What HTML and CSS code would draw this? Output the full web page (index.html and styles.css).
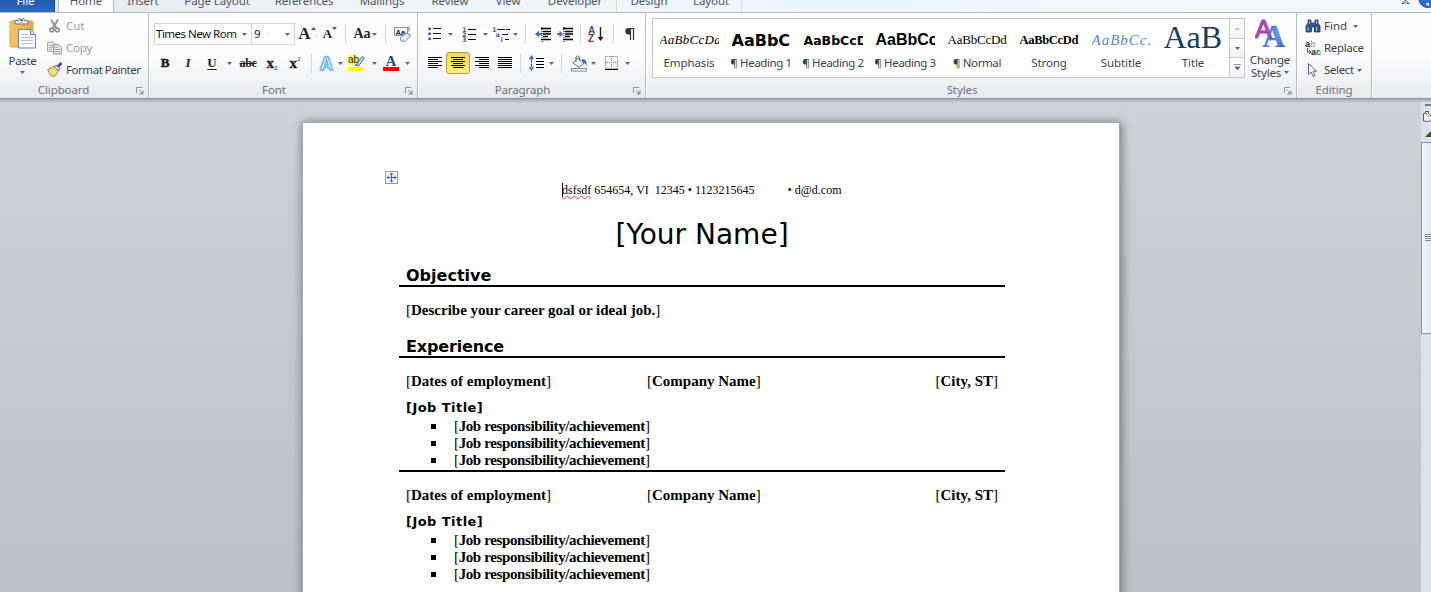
FILE: index.html
```
<!DOCTYPE html>
<html lang="en">
<head>
<meta charset="utf-8">
<title>Resume - Word</title>
<link rel="stylesheet" href="styles.css">
</head>
<body>
<svg class="defs" width="0" height="0">
  <defs>
    <linearGradient id="board" x1="0" x2="1"><stop offset="0" stop-color="#f3c567"/><stop offset="1" stop-color="#e5a940"/></linearGradient>
    <linearGradient id="blueA" x1="0" y1="0" x2="1" y2="1"><stop offset="0" stop-color="#3e74d6"/><stop offset=".6" stop-color="#5e98ee"/><stop offset="1" stop-color="#2450a8"/></linearGradient>
    <symbol id="launcher" viewBox="0 0 8 8"><path d="M0.5 6V.5H6" fill="none" stroke="#8f949c"/><path d="M3 3l3 3" stroke="#8f949c"/><path d="M7.5 3v4.500H3z" fill="#8f949c"/></symbol>
    <symbol id="down" viewBox="0 0 5 3"><path d="M0 0h5L2.500 3z" fill="#62666c"/></symbol>
  </defs>
</svg>

<nav class="tabs">
  <span class="tab file">File</span>
  <span class="tab home">Home</span>
  <span class="tab insert">Insert</span>
  <span class="tab pagelayout">Page Layout</span>
  <span class="tab references">References</span>
  <span class="tab mailings">Mailings</span>
  <span class="tab review">Review</span>
  <span class="tab view">View</span>
  <span class="tab developer">Developer</span>
  <span class="tab design">Design</span>
  <span class="tab layout">Layout</span>
  <svg class="help" width="36" height="10" viewBox="0 0 36 10">
    <path d="M7 3.500L10.500 0 14 3.500H11.800L10.500 2.200 9.200 3.500z" fill="#fff" stroke="#4b5158"/>
    <circle cx="32.500" cy="-1" r="8.500" fill="#2f6fc8" stroke="#1c4f9c"/><rect x="31.500" y="3" width="2.500" height="2.500" fill="#fff"/>
  </svg>
</nav>

<div class="ribbon">
  <section class="group clipboard">
    <div class="body">
      <div class="paste">
        <svg width="28" height="32" viewBox="0 0 28 32">
          <rect x="1" y="3" width="23" height="26" rx="1.500" fill="url(#board)" stroke="#dba648"/>
          <path d="M6 6V2.500h3.500a3 3 0 0 1 6 0H19V6z" fill="#e3e7ec" stroke="#6f7984"/><circle cx="12.500" cy="2.300" r="1.200" fill="#56606b"/>
          <path d="M9.500 11.500h12l5 5v13.500h-17z" fill="#f7faff" stroke="#6d86ab"/><path d="M21.500 11.500v5h5" fill="#cfdcf0" stroke="#6d86ab"/>
          <path d="M12 16.500h7M12 19.500h12M12 22.500h12M12 25.500h12" stroke="#b4c2d8"/>
        </svg>
        <span>Paste</span>
        <svg class="arr" width="5" height="3"><use href="#down"/></svg>
      </div>
      <div class="cmds">
        <div class="cmd off"><svg width="16" height="16" viewBox="0 0 16 16"><path d="M4 1.500l5.500 9M11 1.500l-5.500 9" stroke="#96999d" stroke-width="2.200"/><circle cx="4.700" cy="12" r="1.900" fill="none" stroke="#8b8e92" stroke-width="1.700"/><circle cx="10.300" cy="12" r="1.900" fill="none" stroke="#8b8e92" stroke-width="1.700"/></svg><span class="t-cut">Cut</span></div>
        <div class="cmd off"><svg width="16" height="16" viewBox="0 0 16 16"><path d="M.5 2h6l2 2v7.500h-8z" fill="#e6e6e6" stroke="#a9a9a9"/><path d="M2 5.500h4M2 7.500h4M2 9.500h3" stroke="#b3b3b3"/><path d="M6.500 4.500h5l3 3v6.500h-8z" fill="#e2e2e2" stroke="#989898"/><path d="M8 7.500h3M8 9.500h5M8 11.500h5" stroke="#a8a8a8"/></svg><span class="t-copy">Copy</span></div>
        <div class="cmd"><svg width="16" height="16" viewBox="0 0 16 16"><path d="M0.500 8L7 4.500l4.500 4.500-4 5.500-3-.5z" fill="#f3dc77" stroke="#a58a32"/><path d="M3 9.500l4 4M5 8l4 4" stroke="#fff3b5"/><path d="M7 4.500l2-1.500 4 4-1.500 2z" fill="#dfe2e6" stroke="#6e757e"/><path d="M11 4.500L14.500 1" stroke="#4a4a9c" stroke-width="3"/></svg><span class="t-fp">Format Painter</span></div>
      </div>
    </div>
    <footer><span>Clipboard</span><svg width="8" height="8"><use href="#launcher"/></svg></footer>
  </section>

  <section class="group font">
    <div class="body rows">
      <div class="row">
        <div class="combo face"><span>Times New Rom</span><svg width="5" height="3"><use href="#down"/></svg></div>
        <div class="combo size"><span>9</span><svg width="5" height="3"><use href="#down"/></svg></div>
        <div class="c w24 serif grow">A<svg width="5" height="3" viewBox="0 0 5 3"><path d="M0 3h5L2.500 0z" fill="#2c57a8"/></svg></div>
        <div class="c w22 serif shrink">A<svg width="5" height="3" viewBox="0 0 5 3"><path d="M0 0h5L2.500 3z" fill="#2c57a8"/></svg></div>
        <div class="c w8"><i class="sep"></i></div>
        <div class="c w20 serif aa">Aa</div>
        <div class="c w8"><svg width="5" height="3"><use href="#down"/></svg></div>
        <div class="c w14"><i class="sep"></i></div>
        <div class="c w22"><svg width="18" height="17" viewBox="0 0 18 17"><rect x=".5" y="1.500" width="13" height="8" fill="#fff" stroke="#7b93b8"/><text x="1.500" y="8.500" class="tiny">Aa</text><path d="M15 .5v5" stroke="#4a75b8"/><path d="M6 12l6-5 4 1.500v2L11 15.500 7 15z" fill="#e4ecf7" stroke="#6e8db8"/></svg></div>
      </div>
      <div class="row second">
        <div class="c w22 serif b">B</div>
        <div class="c w24 serif i">I</div>
        <div class="c w24 serif u">U</div>
        <div class="c w11"><svg width="5" height="3"><use href="#down"/></svg></div>
        <div class="c w26 serif strike">abc</div>
        <div class="c w22 serif x">x<sub>2</sub></div>
        <div class="c w24 serif x">x<sup>2</sup></div>
        <div class="c w8"><i class="sep"></i></div>
        <div class="c w22"><svg width="17" height="17" viewBox="0 0 17 17"><text x="2" y="14.500" class="glow">A</text></svg></div>
        <div class="c w6"><svg width="5" height="3"><use href="#down"/></svg></div>
        <div class="c w26"><svg width="17" height="17" viewBox="0 0 17 17"><rect x="0" y="0" width="9" height="10" fill="#ff6"/><text x="0" y="7.500" class="ab">ab</text><path d="M8.500 9.500L14 1.500l2.500 1.500-6 8z" fill="#c9d7ea" stroke="#526d96"/><path d="M6.500 11l2-2 2 1.500z" fill="#47505c"/><rect x="0" y="12" width="16" height="4" fill="#ff0"/></svg></div>
        <div class="c w11"><svg width="5" height="3"><use href="#down"/></svg></div>
        <div class="c w22"><svg width="16" height="17" viewBox="0 0 16 17"><text x="2.500" y="10.500" class="fc">A</text><rect x="0" y="12" width="16" height="4" fill="#f00"/></svg></div>
        <div class="c w11"><svg width="5" height="3"><use href="#down"/></svg></div>
      </div>
    </div>
    <footer><span>Font</span><svg width="8" height="8"><use href="#launcher"/></svg></footer>
  </section>

  <section class="group para">
    <div class="body rows">
      <div class="row first">
        <div class="c w20"><svg width="14" height="14" viewBox="0 0 14 14"><g fill="#3a62b5"><circle cx="1.600" cy="1.700" r="1.500"/><circle cx="1.600" cy="6.700" r="1.500"/><circle cx="1.600" cy="11.700" r="1.500"/></g><path d="M5 1.500h8M5 6.500h8M5 11.500h8" stroke="#111"/></svg></div>
        <div class="c w11"><svg width="5" height="3"><use href="#down"/></svg></div>
        <div class="c w26"><svg width="15" height="15" viewBox="0 0 15 15"><text x="0" y="4.800" class="num">1</text><text x="0" y="9.800" class="num">2</text><text x="0" y="14.700" class="num">3</text><path d="M6 2.500h8M6 7.500h8M6 12.500h8" stroke="#111"/></svg></div>
        <div class="c w6"><svg width="5" height="3"><use href="#down"/></svg></div>
        <div class="c w22 nudge"><svg width="18" height="15" viewBox="0 0 18 15"><text x="0" y="4.800" class="num">1</text><text x="3.500" y="9.800" class="num">a</text><text x="8.500" y="14.700" class="num">i</text><path d="M5 2.500h13M10 7.500h6M13 12.500h4" stroke="#111" stroke-dasharray="8 1"/></svg></div>
        <div class="c w6"><svg width="5" height="3"><use href="#down"/></svg></div>
        <div class="c w14"><i class="sep"></i></div>
        <div class="c w22"><svg width="16" height="15" viewBox="0 0 16 15"><path d="M6 1.500h10M8 4.500h8M8 7h8M8 9.500h5M6 12.500h10" stroke="#000" stroke-width="1.500"/><path d="M0 7l4-3.500V6h3v2H4v2.500z" fill="#3b6fd0"/><path d="M7 0v15" stroke="#000" stroke-dasharray="1 1"/></svg></div>
        <div class="c w22"><svg width="16" height="15" viewBox="0 0 16 15"><path d="M6 1.500h10M8 4.500h8M8 7h8M8 9.500h5M6 12.500h10" stroke="#000" stroke-width="1.500"/><path d="M6 7L2.500 3.500V6H0v2h2.500v2.500z" fill="#3b6fd0"/><path d="M7 0v15" stroke="#000" stroke-dasharray="1 1"/></svg></div>
        <div class="c w8"><i class="sep"></i></div>
        <div class="c w24"><svg width="16" height="17" viewBox="0 0 16 17"><text x="0" y="8" class="az a">A</text><text x="0" y="16" class="az z">Z</text><path d="M12.500 1v12" stroke="#222" stroke-width="1.400"/><path d="M9.500 11h6l-3 4z" fill="#222"/></svg></div>
        <div class="c w11"><i class="sep"></i></div>
        <div class="c w22"><svg width="12" height="14" viewBox="0 0 12 14"><path d="M10.500 1.500H5M6.500 1v12M9.500 1v12" stroke="#333" stroke-width="1.200" fill="none"/><path d="M6.500 1H4.500a3 3 0 0 0 0 6.500h2z" fill="#333"/></svg></div>
      </div>
      <div class="row second">
        <div class="c w22"><svg width="14" height="12" viewBox="0 0 14 12"><path d="M0 .5h14M0 2.500h10M0 4.500h14M0 6.500h10M0 8.500h14M0 10.500h10" stroke="#000"/></svg></div>
        <div class="c w24 active"><svg width="14" height="12" viewBox="0 0 14 12"><path d="M0 .5h14M2 2.500h10M0 4.500h14M2 6.500h10M0 8.500h14M2 10.500h10" stroke="#000"/></svg></div>
        <div class="c w24"><svg width="14" height="12" viewBox="0 0 14 12"><path d="M0 .5h14M4 2.500h10M0 4.500h14M4 6.500h10M0 8.500h14M4 10.500h10" stroke="#000"/></svg></div>
        <div class="c w22"><svg width="14" height="12" viewBox="0 0 14 12"><path d="M0 .5h14M0 2.500h14M0 4.500h14M0 6.500h14M0 8.500h14M0 10.500h14" stroke="#000"/></svg></div>
        <div class="c w8"><i class="sep"></i></div>
        <div class="c w24"><svg width="15" height="16" viewBox="0 0 15 16"><path d="M2.500 0L0 4h5zM2.500 16L0 12h5zM1.800 3v10h1.400V3z" fill="#2f63c4"/><path d="M0 8h5" stroke="#fff"/><path d="M7 3.500h8M7 6.500h8M7 9.500h8M7 12.500h8" stroke="#000"/></svg></div>
        <div class="c w6"><svg width="5" height="3"><use href="#down"/></svg></div>
        <div class="c w14"><i class="sep"></i></div>
        <div class="c w22"><svg width="17" height="17" viewBox="0 0 17 17"><path d="M2 8l5-5 6 5-5 4.500z" fill="#eaf1fa" stroke="#587299"/><path d="M5 6.500V2a2 2 0 0 1 3.500 0v4" fill="none" stroke="#55677e"/><path d="M11 4c4 0 5 3 4.500 7-1-2-2-3.500-4.500-4z" fill="#3b6cc2"/><rect x=".5" y="13.500" width="15" height="2.500" fill="#fff" stroke="#888"/></svg></div>
        <div class="c w6"><svg width="5" height="3"><use href="#down"/></svg></div>
        <div class="c w26 nudge"><svg width="13" height="14" viewBox="0 0 13 14"><path d="M.5 .5h12v11M.5 .5v12M6.500 0v12M0 6.500h13" fill="none" stroke="#777" stroke-dasharray="1 1"/><path d="M0 13.500h13" stroke="#000" stroke-width="1.500"/></svg></div>
        <div class="c w6"><svg width="5" height="3"><use href="#down"/></svg></div>
      </div>
    </div>
    <footer><span>Paragraph</span><svg width="8" height="8"><use href="#launcher"/></svg></footer>
  </section>

  <section class="group styles">
    <div class="body">
      <div class="gallery">
        <div class="style"><div class="pv p-emph">AaBbCcDd</div><span>Emphasis</span></div>
        <div class="style"><div class="pv p-h1">AaBbC</div><span class="hd">¶ Heading 1</span></div>
        <div class="style"><div class="pv p-h2">AaBbCcD</div><span class="hd">¶ Heading 2</span></div>
        <div class="style"><div class="pv p-h3">AaBbCc</div><span class="hd">¶ Heading 3</span></div>
        <div class="style"><div class="pv p-norm">AaBbCcDd</div><span class="hd">¶ Normal</span></div>
        <div class="style"><div class="pv p-strong">AaBbCcDd</div><span>Strong</span></div>
        <div class="style"><div class="pv p-sub">AaBbCc.</div><span>Subtitle</span></div>
        <div class="style"><div class="pv p-title">AaB</div><span>Title</span></div>
        <div class="gscroll">
          <i class="dis"><svg width="5" height="3" viewBox="0 0 5 3"><path d="M0 3h5L2.500 0z" fill="#c0c3c7"/></svg></i>
          <i><svg width="5" height="3"><use href="#down"/></svg></i>
          <i><svg width="7" height="7" viewBox="0 0 7 7"><path d="M0 .5h7M1 3h5L3.500 6z" fill="#62666c" stroke="#62666c" stroke-width=".7"/></svg></i>
        </div>
      </div>
      <div class="change">
        <svg width="30" height="28" viewBox="0 0 30 28"><text x="0" y="19" class="pinkA">A</text><text x="7.500" y="27.500" class="bigA">A</text></svg>
        <span>Change</span>
        <span class="st">Styles <svg width="5" height="3"><use href="#down"/></svg></span>
      </div>
    </div>
    <footer><span>Styles</span><svg width="8" height="8"><use href="#launcher"/></svg></footer>
  </section>

  <section class="group editing">
    <div class="body">
      <div class="cmds">
        <div class="cmd"><svg width="16" height="16" viewBox="0 0 16 16"><path d="M3 2h3v3h4V2h3v3l2 3v6H9.500V9h-3v5H1V8l2-3z" fill="#34558f" stroke="#1e3a6e" stroke-width=".8"/><path d="M3 9v4M11.500 9v4M4.500 3v3M11.500 3v3" stroke="#a9c3ea"/></svg><span class="t-find">Find</span><svg class="arr" width="5" height="3"><use href="#down"/></svg></div>
        <div class="cmd"><svg width="16" height="16" viewBox="0 0 16 16"><text x="0" y="7" class="rep">a<tspan fill="#aaa">b</tspan></text><text x="6" y="14.500" class="rep">a<tspan fill="#168a16">c</tspan></text><path d="M2.500 8v4h3M4 10l2 2-2 2" fill="none" stroke="#30589e"/></svg><span class="t-rep">Replace</span></div>
        <div class="cmd"><svg width="16" height="16" viewBox="0 0 16 16"><path d="M3.500 1.500v11l2.700-2.500 2 4.500 2-1-2-4.200h3.300z" fill="#fff" stroke="#53688c"/></svg><span class="t-sel">Select</span><svg class="arr near" width="5" height="3"><use href="#down"/></svg></div>
      </div>
    </div>
    <footer><span>Editing</span></footer>
  </section>
</div>

<main class="workspace">
  <article class="page">
    <svg class="anchor" width="13" height="13" viewBox="0 0 13 13"><rect x=".5" y=".5" width="12" height="12" fill="#f3f5f8" stroke="#979ca4"/><path d="M6.500 2.500v8M2.500 6.500h8" stroke="#3565c0"/><path d="M6.500 1.500l2 2h-4zM6.500 11.500l2-2h-4zM1.500 6.500l2-2v4zM11.500 6.500l-2-2v4z" fill="#3565c0"/></svg>
    <p class="contact"><i class="caret"></i><span class="typo">dsfsdf</span> 654654, VI&nbsp; 12345 • 1123215645<span class="mail">• d@d.com</span></p>
    <h1>[Your Name]</h1>
    <h2 class="obj">Objective</h2>
    <p class="goal">[<b>Describe your career goal or ideal job.</b>]</p>
    <h2 class="exp">Experience</h2>
    <div class="job">
      <div class="head"><span class="dates">[<b>Dates of employment</b>]</span><span class="co">[<b>Company Name</b>]</span><span class="city">[<b>City, ST</b>]</span></div>
      <h3>[Job Title]</h3>
      <ul><li><span>[<b>Job responsibility/achievement</b>]</span></li><li><span>[<b>Job responsibility/achievement</b>]</span></li><li><span>[<b>Job responsibility/achievement</b>]</span></li></ul>
    </div>
    <div class="job">
      <div class="head"><span class="dates">[<b>Dates of employment</b>]</span><span class="co">[<b>Company Name</b>]</span><span class="city">[<b>City, ST</b>]</span></div>
      <h3>[Job Title]</h3>
      <ul><li><span>[<b>Job responsibility/achievement</b>]</span></li><li><span>[<b>Job responsibility/achievement</b>]</span></li><li><span>[<b>Job responsibility/achievement</b>]</span></li></ul>
    </div>
  </article>
  <aside class="vscroll">
    <i class="split"></i>
    <svg class="ruler" width="8" height="13" viewBox="0 0 8 13"><path d="M.5 11V3.500h2v-2h3v2l3 3v5l-1-1-2 1z" fill="#fff" stroke="#555"/><path d="M3 3l4 5" stroke="#a05050" stroke-dasharray="1 1"/></svg>
    <svg class="up" width="6" height="5" viewBox="0 0 6 5"><path d="M0 5L5 0h1v5z" fill="#444"/></svg>
    <div class="thumb"><svg width="6" height="8" viewBox="0 0 6 8"><path d="M0 .5h6M0 2.500h6M0 4.500h6M0 6.500h6" stroke="#858a92"/></svg></div>
  </aside>
</main>
</body>
</html>
```
FILE: styles.css
```
* { box-sizing: border-box; }
html, body { height: 100%; }
body {
  margin: 0; width: 1431px; height: 592px; overflow: hidden;
  display: flex; flex-direction: column;
  font: 12px/14px "Noto Sans", "Open Sans", sans-serif; color: #3b3f46;
}
svg { display: block; flex: none; }
i { font-style: normal; }
.defs { position: absolute; }

/* tab strip */
.tabs {
  flex: none; height: 13px; display: flex; overflow: hidden;
  background: linear-gradient(90deg, #e4e9f0, #f0f5fb 30%, #eef6fd 60%, #f3f8fe);
  border-bottom: 1px solid #b3b8c0; font-size: 11.5px; letter-spacing: -.1px;
}
.tab { flex: none; display: flex; justify-content: center; height: 22px; line-height: 20px; margin-top: -9px; white-space: nowrap; color: #50555d; }
.file { width: 55px; padding-right: 3px; margin-right: 3px; background: linear-gradient(#1c4fa5, #2c69c6); color: #fff; border-right: 1px solid #1a4a9a; }
.home { width: 56px; background: #fff; border: solid #b3b8c0; border-width: 0 1px; }
.insert { width: 58px; }
.pagelayout { width: 90px; }
.references { width: 84px; }
.mailings { width: 72px; }
.review { width: 64px; }
.view { width: 52px; }
.developer { width: 83px; border-right: 1px solid #e2ddb5; }
.design { width: 64px; }
.layout { width: 61px; border-right: 1px solid #dcdcc5; }
.help { margin-left: auto; }

/* ribbon */
.ribbon {
  flex: none; height: 86px; display: flex;
  background: linear-gradient(#fff, #fcfcfd 50%, #f2f3f5 75%, #e6e9ed);
  border-bottom: 1px solid #8d9299;
}
.group { flex: none; display: flex; flex-direction: column; border-right: 1px solid #b9bdc3; box-shadow: 1px 0 #fff; }
.clipboard { width: 149px; }
.font { width: 269px; }
.para { width: 228px; }
.styles { width: 651px; }
.editing { width: 75px; }
.body { height: 68px; display: flex; }
footer { display: grid; grid-template-columns: 12px 1fr 12px; height: 16px; line-height: 17px; text-align: center; color: #6c717c; font-size: 11.5px; letter-spacing: -.1px; }
footer span { grid-column: 2; padding-right: 21px; }
.font footer span { padding-right: 18px; }
.para footer span, .styles footer span { padding-right: 18px; }
.editing footer span { padding: 0; }
footer svg { margin-top: 6px; }

.paste { width: 45px; display: flex; flex-direction: column; align-items: center; padding-top: 5px; }
.paste span { margin-top: 4px; font-size: 11.5px; line-height: 14px; letter-spacing: -.3px; }
.paste .arr { margin-top: 3px; }
.cmds { padding-top: 2px; font-size: 11.5px; }
.cmd { height: 22px; display: flex; align-items: center; margin-left: 2px; white-space: nowrap; }
.cmd span { margin-left: 3px; }
.cmd .arr { margin-left: 6px; }
.cmd .near { margin-left: 3px; }
.off { color: #9a9da2; }
.t-copy { letter-spacing: -.2px; }
.t-fp { letter-spacing: -.45px; }
.editing .cmd { margin-left: 8px; }
.t-rep, .t-sel { letter-spacing: -.35px; }

.rows { flex-direction: column; padding-top: 7px; }
.row { height: 28px; display: flex; align-items: center; padding-left: 5px; }
.second { margin-top: 1px; }
.para .first { padding-left: 7px; }
.para .second { padding-left: 6px; }
.c { flex: none; height: 22px; display: flex; align-items: center; justify-content: center; }
.nudge { margin-left: 2px; }
.w6 { width: 6px; } .w8 { width: 8px; } .w11 { width: 11px; } .w14 { width: 14px; }
.w20 { width: 20px; } .w22 { width: 22px; } .w24 { width: 24px; } .w26 { width: 26px; }
.sep { width: 1px; height: 20px; background: #d3d6db; }
.combo { flex: none; height: 22px; border: 1px solid #d0d3d7; background: #fff; display: flex; align-items: center; justify-content: space-between; padding: 0 4px 0 1px; color: #111; font-size: 11.5px; white-space: nowrap; letter-spacing: -.5px; }
.face { width: 98px; }
.size { width: 43px; border-left: 0; padding-left: 2px; }
.serif { font-family: "Liberation Serif", serif; font-weight: bold; color: #222; }
.grow { font-size: 17px; } .shrink { font-size: 13px; }
.grow svg, .shrink svg { align-self: flex-start; margin-top: 4px; }
.aa { font-size: 14px; margin-left: 3px; margin-right: -2px; }
.b, .i, .u { font-size: 13px; }
.b { -webkit-text-stroke: .5px #111; }
.i { font-style: italic; }
.u { text-decoration: underline; text-underline-offset: 2px; }
.strike { font-size: 12px; text-decoration: line-through; letter-spacing: -.3px; }
.x { font-size: 15px; -webkit-text-stroke: .3px #222; }
.x sub, .x sup { font-size: 7px; line-height: 7px; color: #2c57a8; -webkit-text-stroke: 0; }
.x sub { margin-top: 10px; } .x sup { margin-bottom: 8px; }
.active { border: 1px solid #c29331; border-radius: 3px; background: linear-gradient(#fbd171, #ffe06a 50%, #fff189); }
.tiny { font: bold 7.500px "Liberation Sans", sans-serif; fill: #222; }
.glow { font: bold 18px "Liberation Sans", sans-serif; fill: #fff; stroke: #6cb2df; stroke-width: 1.300px; filter: drop-shadow(0 0 1px #7fc4ec); }
.ab { font: 10px "Liberation Sans", sans-serif; fill: #111; }
.fc { font: bold 15px "Liberation Serif", serif; fill: #25488c; }
.num { font: bold 6.500px "DejaVu Sans", sans-serif; fill: #3a62b5; }
.az { font: bold 10px "Liberation Sans", sans-serif; }
.az.a { fill: #2d56a5; } .az.z { fill: #8f2e3c; }

.gallery { width: 593px; height: 60px; margin: 5px 0 0 6px; border: 1px solid #c3c7cc; background: #fff; display: flex; }
.style { width: 72px; display: flex; flex-direction: column; align-items: center; font-size: 11.5px; white-space: nowrap; }
.pv { width: 59px; height: 30px; overflow: hidden; color: #000; margin-top: 6px; text-align: left; }
.style span { margin-top: 1px; letter-spacing: -.1px; }
.style .hd { letter-spacing: -.4px; }
.p-emph { font: italic 13px/30px "Liberation Serif", serif; letter-spacing: .3px; }
.p-h1 { font: bold 16px/31px "DejaVu Sans", sans-serif; }
.p-h2 { font: bold 12.500px/31px "DejaVu Sans", sans-serif; }
.p-h3 { font: bold 16px/29px "Liberation Sans", sans-serif; }
.p-norm { font: 13px/30px "Liberation Serif", serif; letter-spacing: -.2px; }
.p-strong { font: bold 12.500px/30px "Liberation Serif", serif; letter-spacing: -.3px; }
.p-sub { font: italic 15px/30px "Liberation Serif", serif; letter-spacing: 1px; color: #5286c2; }
.p-title { font: 32px/24px "Liberation Serif", serif; color: #1c3a5f; }
.gscroll { width: 15px; border-left: 1px solid #c3c7cc; display: flex; flex-direction: column; }
.gscroll i { flex: 1; display: flex; align-items: center; justify-content: center; background: linear-gradient(#fff, #f0f1f3); border-bottom: 1px solid #c3c7cc; }
.gscroll i:last-child { border-bottom: 0; }
.change { width: 50px; display: flex; flex-direction: column; align-items: center; padding-top: 6px; font-size: 11.5px; line-height: 13px; letter-spacing: -.2px; }
.change > svg { margin-bottom: 6px; }
.st { display: flex; align-items: center; gap: 3px; }
.pinkA { font: 25px "Liberation Sans", sans-serif; fill: #b94fbd; stroke: #a445ab; stroke-width: 1.200px; }
.bigA { font: bold 31px "Liberation Serif", serif; fill: url(#blueA); stroke: #2a56a8; stroke-width: .4px; }
.rep { font: bold 9px "Liberation Sans", sans-serif; fill: #222; }

/* document area */
.workspace { flex: 1; display: flex; justify-content: space-between; background: linear-gradient(#a6a9ae, #cfd2d7 4px, #cccfd4 60px, #bdc0c4); overflow: hidden; }
.page { width: 816px; height: 700px; margin: 24px 0 0 303px; padding: 59px 114px 0 96px; background: #fff; box-shadow: 0 0 0 1px #a4a9b1, 1px 1px 9px 2px rgba(60, 68, 80, .6); color: #000; position: relative; }
.page p, .page h1, .page h2, .page h3, .page ul { margin: 0; padding: 0; list-style: none; white-space: nowrap; }
.anchor { position: absolute; left: 82px; top: 48px; }
.page .contact { position: relative; padding-left: 163px; font: 12px/16px "Liberation Serif", serif; }
.caret { position: absolute; left: 163px; top: 1px; width: 1px; height: 14px; background: #000; }
.typo { text-decoration: underline wavy #e04040 1px; text-underline-offset: 1px; text-decoration-skip-ink: none; }
.mail { margin-left: 33px; }
.page h1 { height: 42px; margin-top: 15px; text-align: center; font: 28px/44px "DejaVu Sans", sans-serif; }
.page h2 { height: 24px; padding-left: 7px; border-bottom: 2px solid #000; font: bold 16px/25px "DejaVu Sans", sans-serif; }
.page .obj { margin-top: 8px; }
.page .exp { margin-top: 14px; letter-spacing: -.15px; }
.page .goal { margin-top: 14px; height: 19px; padding-left: 7px; font: 15px/19px "Liberation Serif", serif; }
.job { height: 114px; font: 15px/17px "Liberation Serif", serif; padding-top: 15px; }
.job:not(:last-child) { border-bottom: 2px solid #000; }
.head { display: grid; grid-template-columns: 241px 1fr auto; padding: 0 7px; height: 17px; }
.page .job h3 { font: bold 13px/16px "DejaVu Sans", sans-serif; letter-spacing: .45px; padding-left: 7px; margin-top: 10px; height: 18px; }
.page li { display: flex; align-items: center; padding-left: 32px; height: 17px; letter-spacing: -.38px; }
.page li::before { content: ""; width: 5px; height: 5px; margin-right: 18px; background: #000; }

/* vertical scrollbar */
.vscroll { width: 10px; margin-top: 3px; background: #dde2e9; display: flex; flex-direction: column; align-items: flex-end; }
.split { width: 6px; height: 2px; margin-top: 2px; background: #777b82; }
.ruler { margin: 4px 0 3px; }
.up { margin: 6px 0 5px; }
.thumb { width: 10px; height: 192px; border: 1px solid #8d929b; border-right: 0; background: linear-gradient(90deg, #f3f5f8, #e2e6ec); display: flex; align-items: center; justify-content: flex-end; }
```
